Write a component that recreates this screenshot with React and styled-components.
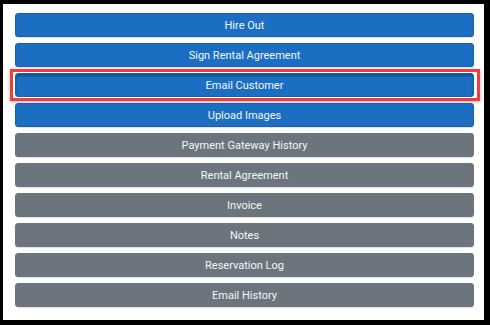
import React from 'react';
import styled, { createGlobalStyle } from 'styled-components';

const GlobalStyle = createGlobalStyle`
	html, body {
		margin: 0;
		padding: 0;
		background: #000;
	}
	body {
		font-family: Roboto, 'Liberation Sans', sans-serif;
	}
`;

const Panel = styled.div`
	margin: 4px 6px 5px 3px;
	height: 316px;
	box-sizing: border-box;
	background: #fff;
	padding: 9px 10px 13px 12px;
	display: flex;
	flex-direction: column;
	gap: 6px;
`;

const Button = styled.button`
	position: relative;
	height: 24px;
	width: 100%;
	border: 1px solid ${({ primary }) => (primary ? '#1861ac' : '#6c757d')};
	border-radius: 3px;
	background: ${({ primary }) => (primary ? '#1b6ec2' : '#6c757d')};
	color: #f4f6f9;
	font-family: Roboto, 'Liberation Sans', sans-serif;
	font-size: 11px;
	line-height: 22px;
	padding: 1px 0 0;
	text-align: center;
	box-shadow: ${({ marked }) =>
		marked ? 'inset 0 2px 2px rgba(0,0,0,0.25)' : '0 1px 1px rgba(0,0,0,0.12)'};

	${({ marked }) =>
		marked &&
		`
		&::after {
			content: '';
			position: absolute;
			top: -5px;
			bottom: -5px;
			left: -6px;
			right: -7px;
			border: 3px solid #f23d3d;
			box-shadow: 0 1px 3px rgba(0,0,0,0.35);
			pointer-events: none;
		}
	`}
`;

const items = [
	{ title: 'Hire Out', primary: true },
	{ title: 'Sign Rental Agreement', primary: true },
	{ title: 'Email Customer', primary: true, marked: true },
	{ title: 'Upload Images', primary: true },
	{ title: 'Payment Gateway History' },
	{ title: 'Rental Agreement' },
	{ title: 'Invoice' },
	{ title: 'Notes' },
	{ title: 'Reservation Log' },
	{ title: 'Email History' },
];

const App = () => (
	<>
		<GlobalStyle />
		<Panel>
			{items.map((item) => (
				<Button key={item.title} primary={item.primary} marked={item.marked}>
					{item.title}
				</Button>
			))}
		</Panel>
	</>
);

export default App;
